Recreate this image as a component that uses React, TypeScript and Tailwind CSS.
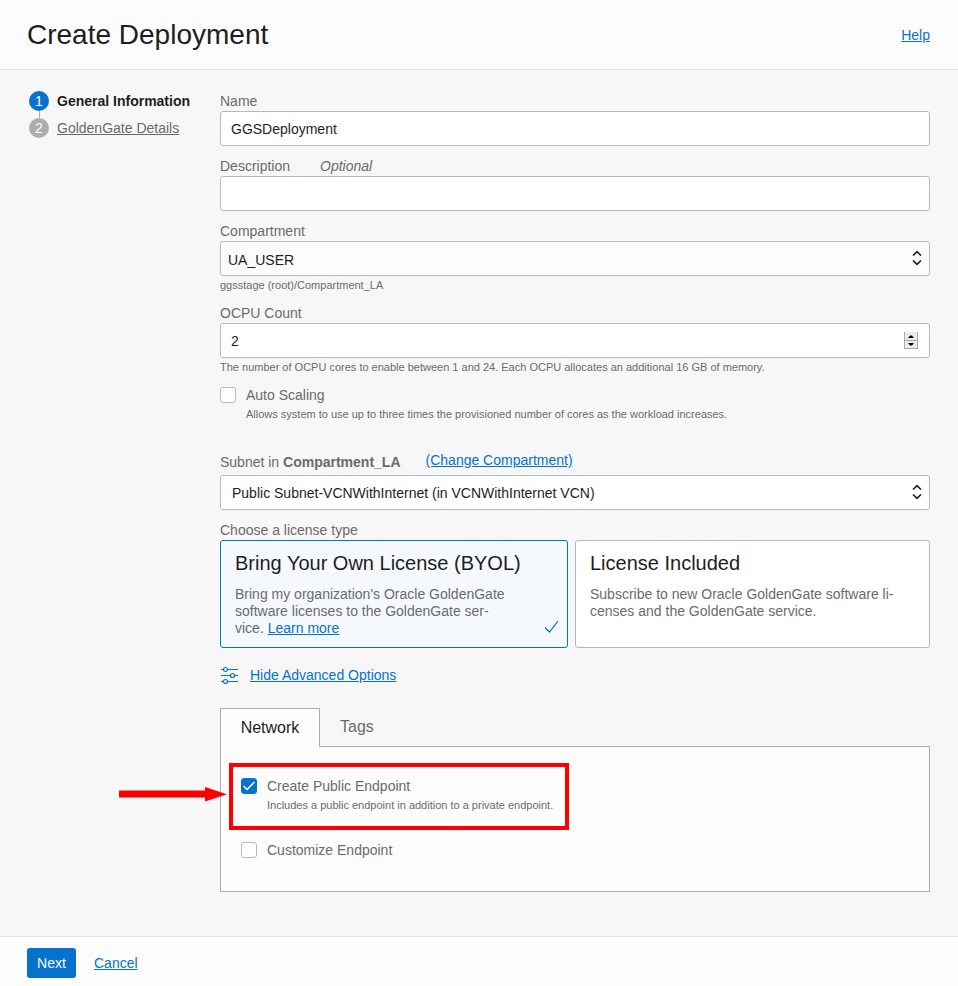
import { useState } from "react";
import type { ReactNode } from "react";

const link = "text-[#0572ce] underline";
const box =
  "block h-[35px] w-full appearance-none rounded-[3px] border border-[#b4b9c3] text-[#1e1e1e]";
const field = `${box} bg-white`;
const label = "text-[#6b6b6b]";
const hint = "text-[11px] leading-[18px] text-[#6b6b6b]";

function SelectArrows() {
  return (
    <svg
      className="pointer-events-none absolute top-[9px] right-2"
      width="10"
      height="16"
      viewBox="0 0 10 16"
      fill="none"
      stroke="#1e1e1e"
      strokeWidth="1.7"
      aria-hidden="true"
    >
      <path d="M1 5.5 L5 1.7 L9 5.5" />
      <path d="M1 10.5 L5 14.3 L9 10.5" />
    </svg>
  );
}

function Check({
  id,
  text,
  description,
  initial = false,
}: {
  id: string;
  text: string;
  description?: string;
  initial?: boolean;
}) {
  const [on, setOn] = useState(initial);
  return (
    <div className="flex gap-[10px]">
      <span className="relative mt-[2px] h-4 w-4 shrink-0">
        <input
          id={id}
          type="checkbox"
          checked={on}
          onChange={(e) => setOn(e.target.checked)}
          className="block h-4 w-4 appearance-none rounded-[3px] border border-[#b4b9c3] bg-white checked:border-[#0572ce] checked:bg-[#0572ce]"
        />
        {on && (
          <svg
            className="pointer-events-none absolute inset-0"
            width="16"
            height="16"
            viewBox="0 0 16 16"
            fill="none"
            stroke="#fff"
            strokeWidth="1.5"
            aria-hidden="true"
          >
            <path d="M2.5 8 L6 11.5 L13.5 4" />
          </svg>
        )}
      </span>
      <div>
        <label htmlFor={id} className={`block leading-5 ${label}`}>
          {text}
        </label>
        {description && <p className={hint}>{description}</p>}
      </div>
    </div>
  );
}

function LicenseCard({
  value,
  title,
  selected,
  onSelect,
  children,
}: {
  value: string;
  title: string;
  selected: boolean;
  onSelect: (value: string) => void;
  children: ReactNode;
}) {
  return (
    <label
      className={`relative block min-h-[108px] rounded-[3px] border px-[14px] pt-[9px] pb-[9px] ${
        selected ? "border-[#0572ce] bg-[#f5f9fe]" : "border-[#b4b9c3] bg-white"
      }`}
    >
      <input
        type="radio"
        name="license"
        value={value}
        checked={selected}
        onChange={() => onSelect(value)}
        className="sr-only"
      />
      <span className="block text-xl leading-[26px] text-[#1e1e1e]">{title}</span>
      <span className={`mt-[10px] block leading-[17px] text-[#6b6b6b] ${selected ? "pr-[46px]" : ""}`}>
        {children}
      </span>
      {selected && (
        <svg
          className="absolute right-2 bottom-[13px]"
          width="15"
          height="14"
          viewBox="0 0 15 14"
          fill="none"
          stroke="#0572ce"
          strokeWidth="1.2"
          aria-hidden="true"
        >
          <path d="M1 7.5 L5.5 12 L14 1" />
        </svg>
      )}
    </label>
  );
}

export default function App() {
  const [license, setLicense] = useState("byol");
  const [count, setCount] = useState(2);

  return (
    <div className="flex min-h-screen flex-col bg-[#f7f7f7] font-['Liberation_Sans',Arial,sans-serif] text-sm leading-5 text-[#1e1e1e]">
      <header className="flex h-[70px] items-center justify-between border-b border-[#e4e4e4] bg-[#fcfcfc] pr-7 pl-[27px]">
        <h1 className="text-[28px] leading-9">Create Deployment</h1>
        <a href="#help" className={link}>
          Help
        </a>
      </header>

      <main className="flex flex-1 pt-[21px] pr-7 pb-11 pl-[29px]">
        <nav className="w-[191px] shrink-0">
          <ol>
            <li className="flex gap-2">
              <span className="flex w-5 flex-col items-center">
                <span className="flex h-5 w-5 items-center justify-center rounded-full bg-[#0572ce] text-white">
                  1
                </span>
                <span className="h-[7px] w-px bg-[#adadad]" />
              </span>
              <span className="font-bold whitespace-nowrap" aria-current="step">
                General Information
              </span>
            </li>
            <li className="flex gap-2">
              <span className="flex h-5 w-5 items-center justify-center rounded-full bg-[#adadad] text-white">
                2
              </span>
              <a href="#details" className="text-[#6b6b6b] underline">
                GoldenGate Details
              </a>
            </li>
          </ol>
        </nav>

        <form id="deployment" className="min-w-0 flex-1" onSubmit={(e) => e.preventDefault()}>
          <label htmlFor="name" className={`block ${label}`}>
            Name
          </label>
          <input id="name" type="text" defaultValue="GGSDeployment" className={`${field} px-[10px]`} />

          <label htmlFor="description" className={`mt-[10px] flex gap-[30px] ${label}`}>
            Description <em>Optional</em>
          </label>
          <input id="description" type="text" className={`${field} px-[10px]`} />

          <label htmlFor="compartment" className={`mt-[10px] block ${label}`}>
            Compartment
          </label>
          <div className="relative">
            <select id="compartment" className={`${box} bg-[#fcfcfc] pt-[2px] pr-8 pl-[7px]`}>
              <option>UA_USER</option>
            </select>
            <SelectArrows />
          </div>
          <p className={hint}>ggsstage (root)/Compartment_LA</p>

          <label htmlFor="ocpu" className={`mt-[9px] block ${label}`}>
            OCPU Count
          </label>
          <div className="relative">
            <input
              id="ocpu"
              type="number"
              min={1}
              max={24}
              value={count}
              onChange={(e) => setCount(Number(e.target.value))}
              className={`${field} px-[10px] [appearance:textfield]`}
            />
            <div className="absolute top-[9px] right-3 flex h-[17px] w-[14px] flex-col gap-px border border-t-0 border-[#a8a8a8] bg-[#a8a8a8]">
              <button
                type="button"
                aria-label="Increase"
                onClick={() => setCount(Math.min(24, count + 1))}
                className="flex h-2 items-center justify-center bg-[#ececec]"
              >
                <svg width="6" height="3" viewBox="0 0 6 3" aria-hidden="true">
                  <path d="M0 3 L2 0.5 H4 L6 3Z" />
                </svg>
              </button>
              <button
                type="button"
                aria-label="Decrease"
                onClick={() => setCount(Math.max(1, count - 1))}
                className="flex flex-1 items-center justify-center bg-[#ececec]"
              >
                <svg width="6" height="3" viewBox="0 0 6 3" aria-hidden="true">
                  <path d="M0 0 L2 2.5 H4 L6 0Z" />
                </svg>
              </button>
            </div>
          </div>
          <p className={hint}>
            The number of OCPU cores to enable between 1 and 24. Each OCPU allocates an additional 16 GB of
            memory.
          </p>

          <div className="mt-[9px]">
            <Check
              id="scaling"
              text="Auto Scaling"
              description="Allows system to use up to three times the provisioned number of cores as the workload increases."
            />
          </div>

          <div className="mt-[27px] flex gap-[25px]">
            <label htmlFor="subnet" className={`pt-[2px] pb-[3px] ${label}`}>
              Subnet in <b>Compartment_LA</b>
            </label>
            <a href="#change" className={link}>
              (Change Compartment)
            </a>
          </div>
          <div className="relative">
            <select id="subnet" className={`${field} pr-8 pl-[11px]`}>
              <option>Public Subnet-VCNWithInternet (in VCNWithInternet VCN)</option>
            </select>
            <SelectArrows />
          </div>

          <fieldset className="mt-[10px]">
            <legend className={label}>Choose a license type</legend>
            <div className="grid grid-cols-[348fr_355fr] gap-[7px]">
              <LicenseCard
                value="byol"
                title="Bring Your Own License (BYOL)"
                selected={license === "byol"}
                onSelect={setLicense}
              >
                <span>
                  Bring my organization's Oracle GoldenGate software licenses to the GoldenGate ser&shy;vice.
                </span>{" "}
                <a href="#learn" className={link}>
                  Learn more
                </a>
              </LicenseCard>
              <LicenseCard
                value="included"
                title="License Included"
                selected={license === "included"}
                onSelect={setLicense}
              >
                Subscribe to new Oracle GoldenGate software li&shy;censes and the GoldenGate service.
              </LicenseCard>
            </div>
          </fieldset>

          <div className="mt-[17px] flex items-center gap-3">
            <svg
              width="18"
              height="18"
              viewBox="0 0 18 18"
              fill="none"
              stroke="#0572ce"
              strokeWidth="1.2"
              aria-hidden="true"
            >
              <path d="M1 3.5H3.5M7.5 3.5H18M1 9.5H10.5M14.5 9.5H18M1 15.5H3.5M7.5 15.5H18" />
              <circle cx="5.5" cy="3.5" r="2" />
              <circle cx="12.5" cy="9.5" r="2" />
              <circle cx="5.5" cy="15.5" r="2" />
            </svg>
            <a href="#advanced" className={link}>
              Hide Advanced Options
            </a>
          </div>

          <div className="mt-[23px] flex text-base" role="tablist">
            <button
              type="button"
              role="tab"
              aria-selected="true"
              className="relative z-10 -mb-px h-[39px] w-[100px] border border-b-0 border-[#adadad] bg-[#fcfcfc] text-[#1e1e1e]"
            >
              Network
            </button>
            <button type="button" role="tab" aria-selected="false" className="px-5 text-[#6b6b6b]">
              Tags
            </button>
          </div>
          <div className="relative border border-[#adadad] bg-[#fcfcfc] px-5 pt-[29px] pb-[31px]" role="tabpanel">
            <Check
              id="public"
              text="Create Public Endpoint"
              description="Includes a public endpoint in addition to a private endpoint."
              initial
            />
            <div className="mt-[26px]">
              <Check id="customize" text="Customize Endpoint" />
            </div>
            <div className="pointer-events-none absolute top-4 left-2 h-[67px] w-[340px] border-4 border-[#ff0000]" />
            <svg
              className="pointer-events-none absolute top-10 -left-[102px]"
              width="109"
              height="15"
              viewBox="0 0 109 15"
              fill="#ff0000"
              aria-hidden="true"
            >
              <path d="M0 3.5H86V0L108 7.2L86 14.5V10.5H0Z" />
            </svg>
          </div>
        </form>
      </main>

      <footer className="flex items-center gap-[18px] border-t border-[#e4e4e4] bg-[#fcfcfc] px-[27px] pt-[11px] pb-2">
        <button type="submit" form="deployment" className="h-[30px] w-[49px] rounded-[3px] bg-[#0572ce] text-white">
          Next
        </button>
        <a href="#cancel" className={link}>
          Cancel
        </a>
      </footer>
    </div>
  );
}
